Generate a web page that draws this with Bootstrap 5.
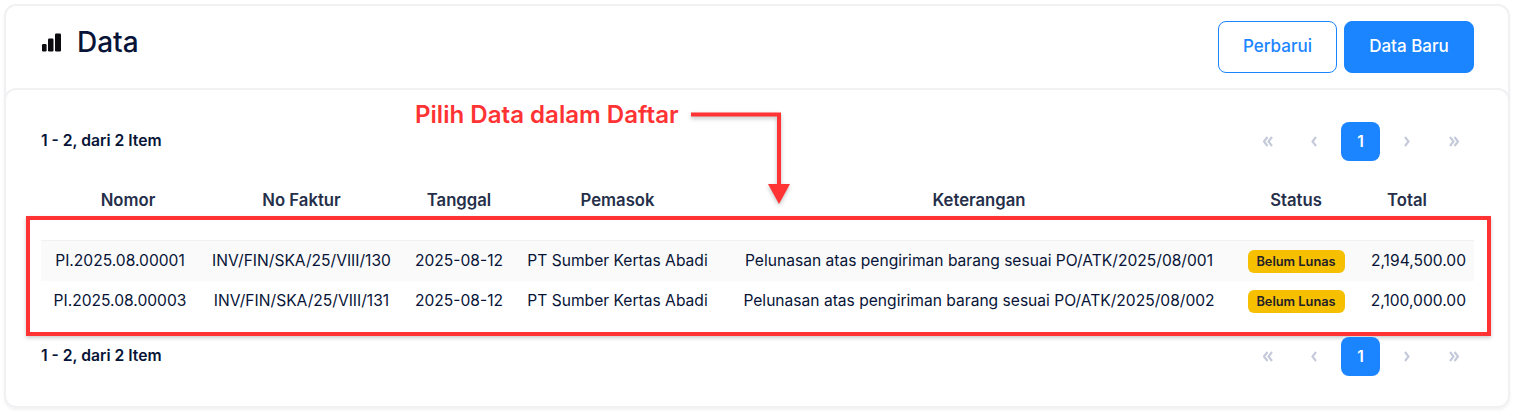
<!DOCTYPE html>
<html lang="id">
<head>
<meta charset="utf-8">
<title>Data</title>
<link href="https://cdn.jsdelivr.net/npm/bootstrap@5.3.0/dist/css/bootstrap.min.css" rel="stylesheet">
<style>
html,body{height:412px;overflow:hidden;background:#fff;}
body{font-family:Inter,"Liberation Sans",sans-serif;color:#071437;position:relative;}
.shell{margin:4px 9px 0 4px;height:404px;border:2px solid #f1f1f4;border-radius:12px;box-shadow:0 2px 3px rgba(0,0,0,.05);overflow:hidden;}
.head-bar{height:82px;padding:15px 34px 0 35px;}
.head-title{font-size:28px;font-weight:500;line-height:32px;color:#071437;margin:5px 0 0 0;}
.head-ico{margin-right:16px;}
.head-actions{gap:7px;}
.btn-ref,.btn-new{height:52px;width:119px;font-size:17px;font-weight:500;border-radius:8px;padding:0;}
.btn-ref{color:#1b84ff;border:1px solid #1b84ff;background:#fff;}
.btn-new{width:130px;color:#fff;background:#1b84ff;border:1px solid #1b84ff;}
.body-pane{height:320px;margin:0 -2px;border:2px solid #f1f1f4;border-bottom:0;border-radius:12px 12px 0 0;padding:32px 35px 0 35px;}
.count-txt{font-size:15.7px;font-weight:600;color:#071437;position:relative;top:-1px;}
.pg-strip{margin:0;gap:7.5px;}
.pg-strip .page-item .page-link{width:39px;height:39px;margin:0;padding:0;display:flex;align-items:center;justify-content:center;border:0;border-radius:8px;font-size:15.5px;font-weight:600;color:#c4cada;background:transparent;}
.pg-strip .page-item.active .page-link{background:#1b84ff;color:#fff;}
.data-tbl{table-layout:fixed;width:1433px;margin:19px 0 16px 0;border-collapse:collapse;}
.data-tbl th{height:40px;padding:2px 0 0 0;text-align:center;font-size:16.7px;font-weight:600;color:#252f4a;border:0;vertical-align:middle;}
.data-tbl th.th-first{padding-left:3px;}
.data-tbl th.th-total{padding-right:2px;}
.gap-row td{height:20px;padding:0;border:0;border-bottom:1px solid #f1f1f4;}
.data-tbl td.cell{height:40.5px;padding:0;text-align:center;font-size:15.6px;font-weight:400;color:#071437;border:0;vertical-align:middle;white-space:nowrap;}
.tr-odd td.cell{background:#fafafa;}
.data-tbl td.cell-first{padding-right:13px;}
.data-tbl td.cell-total{text-align:right;padding-right:8px;}
.state-pill{display:inline-block;width:97px;height:23px;margin:0 -3px;line-height:23px;background:#f6c000;color:#1f2129;border-radius:6px;font-size:12.8px;font-weight:600;vertical-align:middle;}
.callout{position:absolute;left:415px;top:100px;font-size:24.1px;line-height:30px;font-weight:600;color:#ff3333;}
.red-box{position:absolute;left:26px;top:216px;width:1465px;height:120px;border:4px solid #ff3333;box-shadow:0 2px 4px rgba(0,0,0,.2);pointer-events:none;}
.arrow-svg{position:absolute;left:685px;top:108px;filter:drop-shadow(0 2px 2px rgba(0,0,0,.25));}
</style>
</head>
<body>
<div class="shell">
  <div class="head-bar d-flex justify-content-between align-items-start">
    <h1 class="head-title d-flex align-items-center">
      <svg class="head-ico" width="20" height="19" viewBox="0 0 20 19" aria-hidden="true"><rect x="1" y="11" width="4.600" height="7.500" rx="1.200" fill="#0b0b10"/><rect x="7" y="5.500" width="5.500" height="13" rx="1.200" fill="#0b0b10"/><rect x="14" y=".5" width="6" height="18" rx="1.200" fill="#0b0b10"/></svg>Data
    </h1>
    <div class="d-flex head-actions">
      <button class="btn btn-ref">Perbarui</button>
      <button class="btn btn-new">Data Baru</button>
    </div>
  </div>
  <div class="body-pane">
    <div class="d-flex justify-content-between align-items-center">
      <div class="count-txt">1 - 2, dari 2 Item</div>
      <ul class="pagination pg-strip">
        <li class="page-item"><a class="page-link" href="#" aria-label="Pertama"><svg width="10" height="11" viewBox="0 0 10 11"><path d="M4.500 1 1 5.500 4.500 10M9 1 5.500 5.500 9 10" fill="none" stroke="currentColor" stroke-width="2.100"/></svg></a></li>
        <li class="page-item"><a class="page-link" href="#" aria-label="Sebelumnya"><svg width="6" height="11" viewBox="0 0 6 11"><path d="M5 1 1.500 5.500 5 10" fill="none" stroke="currentColor" stroke-width="2.100"/></svg></a></li>
        <li class="page-item active"><a class="page-link" href="#">1</a></li>
        <li class="page-item"><a class="page-link" href="#" aria-label="Berikutnya"><svg width="6" height="11" viewBox="0 0 6 11"><path d="M1 1 4.500 5.500 1 10" fill="none" stroke="currentColor" stroke-width="2.100"/></svg></a></li>
        <li class="page-item"><a class="page-link" href="#" aria-label="Terakhir"><svg width="10" height="11" viewBox="0 0 10 11"><path d="M1 1 4.500 5.500 1 10M5.500 1 9 5.500 5.500 10" fill="none" stroke="currentColor" stroke-width="2.100"/></svg></a></li>
      </ul>
    </div>
    <table class="table data-tbl">
      <colgroup><col style="width:171px"><col style="width:179px"><col style="width:136px"><col style="width:181px"><col style="width:542px"><col style="width:92px"><col style="width:132px"></colgroup>
      <thead><tr><th class="th-first">Nomor</th><th>No Faktur</th><th>Tanggal</th><th>Pemasok</th><th>Keterangan</th><th>Status</th><th class="th-total">Total</th></tr></thead>
      <tbody>
        <tr class="gap-row"><td colspan="7"></td></tr>
        <tr class="tr-odd"><td class="cell cell-first">PI.2025.08.00001</td><td class="cell">INV/FIN/SKA/25/VIII/130</td><td class="cell">2025-08-12</td><td class="cell">PT Sumber Kertas Abadi</td><td class="cell">Pelunasan atas pengiriman barang sesuai PO/ATK/2025/08/001</td><td class="cell"><span class="state-pill">Belum Lunas</span></td><td class="cell cell-total">2,194,500.00</td></tr>
        <tr><td class="cell cell-first">PI.2025.08.00003</td><td class="cell">INV/FIN/SKA/25/VIII/131</td><td class="cell">2025-08-12</td><td class="cell">PT Sumber Kertas Abadi</td><td class="cell">Pelunasan atas pengiriman barang sesuai PO/ATK/2025/08/002</td><td class="cell"><span class="state-pill">Belum Lunas</span></td><td class="cell cell-total">2,100,000.00</td></tr>
      </tbody>
    </table>
    <div class="d-flex justify-content-between align-items-center">
      <div class="count-txt">1 - 2, dari 2 Item</div>
      <ul class="pagination pg-strip">
        <li class="page-item"><a class="page-link" href="#" aria-label="Pertama"><svg width="10" height="11" viewBox="0 0 10 11"><path d="M4.500 1 1 5.500 4.500 10M9 1 5.500 5.500 9 10" fill="none" stroke="currentColor" stroke-width="2.100"/></svg></a></li>
        <li class="page-item"><a class="page-link" href="#" aria-label="Sebelumnya"><svg width="6" height="11" viewBox="0 0 6 11"><path d="M5 1 1.500 5.500 5 10" fill="none" stroke="currentColor" stroke-width="2.100"/></svg></a></li>
        <li class="page-item active"><a class="page-link" href="#">1</a></li>
        <li class="page-item"><a class="page-link" href="#" aria-label="Berikutnya"><svg width="6" height="11" viewBox="0 0 6 11"><path d="M1 1 4.500 5.500 1 10" fill="none" stroke="currentColor" stroke-width="2.100"/></svg></a></li>
        <li class="page-item"><a class="page-link" href="#" aria-label="Terakhir"><svg width="10" height="11" viewBox="0 0 10 11"><path d="M1 1 4.500 5.500 1 10M5.500 1 9 5.500 5.500 10" fill="none" stroke="currentColor" stroke-width="2.100"/></svg></a></li>
      </ul>
    </div>
  </div>
</div>
<div class="callout">Pilih Data dalam Daftar</div>
<svg class="arrow-svg" width="110" height="100" viewBox="0 0 110 100" aria-hidden="true"><path d="M6 6.500H94V78" fill="none" stroke="#ff3333" stroke-width="4"/><path d="M83 76H105L94 96Z" fill="#ff3333"/></svg>
<div class="red-box"></div>
<script src="https://cdn.jsdelivr.net/npm/bootstrap@5.3.0/dist/js/bootstrap.bundle.min.js"></script>
</body>
</html>
